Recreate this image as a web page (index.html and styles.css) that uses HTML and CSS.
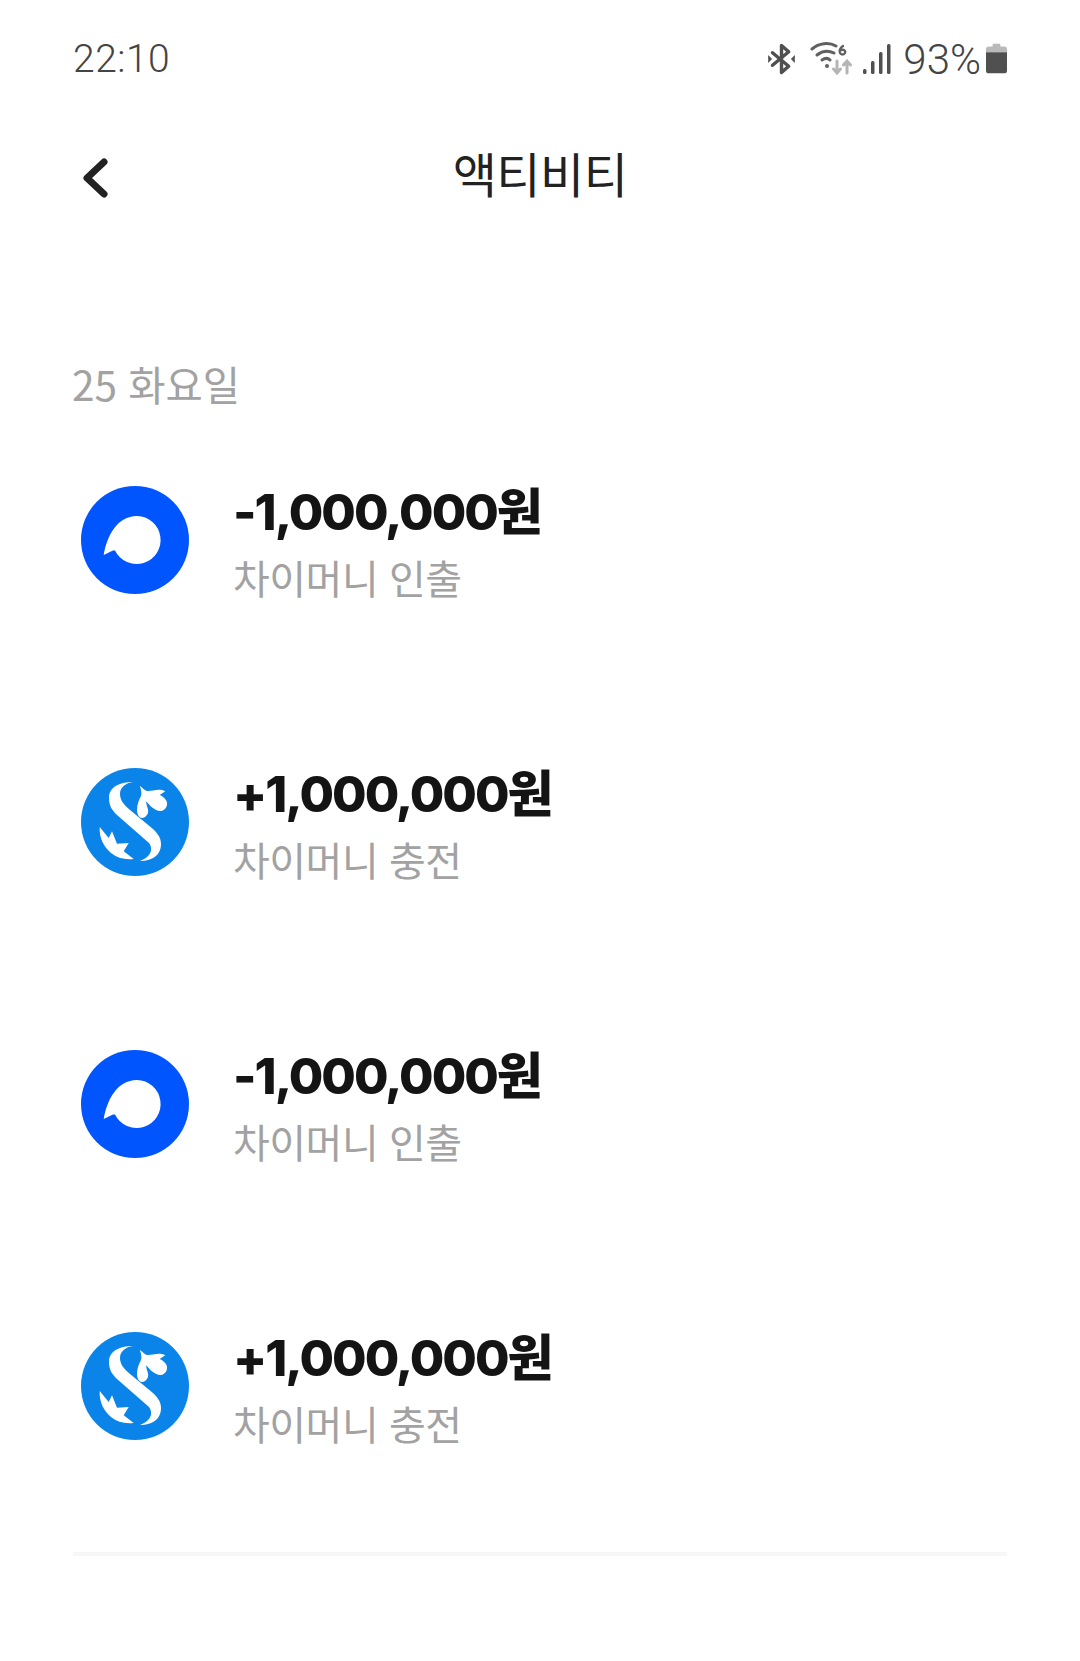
FILE: index.html
```html
<!DOCTYPE html>
<html lang="ko">
<head>
    <meta charset="UTF-8">
    <meta name="viewport" content="width=device-width, initial-scale=1.0">
    <title>액티비티</title>
    <link rel="stylesheet" href="styles.css">
</head>
<body>
    <svg class="sprites" width="0" height="0">
        <symbol id="logo-chai" viewBox="0 0 108 108">
            <circle cx="54" cy="54" r="54" fill="#0055ff"/>
            <path d="M22.700 69C26 50 36 30 56 30a24 24 0 1 1-22 34.500L32 64.500Z" fill="#fff"/>
        </symbol>
        <symbol id="logo-shinhan" viewBox="0 0 108 108">
            <circle cx="54" cy="54" r="54" fill="#0a84e8"/>
            <path d="M52 14C40 14 28 18 28 30C28 38 31 42 36 47L68 75C71 79 71 84 67 88C64 91 61 92 59 93C70 93 80 88 80 76C80 69 76 65 72 61L49 42C43 37 39 32 39 26C39 19 45 15 52 14Z" fill="#fff"/>
            <path d="M58.700 17.700C62 20 64 23 67 23C72 23 78 20 84.300 23.300L78.700 27C83 29 87 33 86 37C85 41 82 43 79 43C74 43 69 38 65.300 33.300C65 38 68 41 67 45C66 48 63 50 61 50C58 50 56 46 56 42C56 36 58 32 60 28C61 25 60 21 58.700 17.700Z" fill="#fff"/>
            <path d="M18.700 59L27.700 70L31 63.300L36 75.700L47.700 75L42.700 83.300L52.700 91C44 92 36 90 30 85C23 79 18 70 18.700 59Z" fill="#fff"/>
        </symbol>
    </svg>

    <div class="status-bar">
        <span class="clock">22:10</span>
        <div class="status-icons">
            <!-- bluetooth -->
            <svg class="icon-bt" width="27" height="32" viewBox="0 0 30 34" fill="none" stroke="#505050" stroke-width="3.800" stroke-linejoin="round" stroke-linecap="round">
                <path d="M5 10L23 25L15 32V2L23 9L5 24"/>
                <path d="M0.500 13.500L4 17L0.500 20.500ZM29.500 13.500L26 17L29.500 20.500Z" fill="#505050" stroke-width="1"/>
            </svg>
            <!-- wifi 6 -->
            <svg class="icon-wifi" width="44" height="34" viewBox="0 0 44 34" fill="none" stroke="#606060" stroke-width="3" stroke-linecap="round">
                <path d="M2 7C9 1 19 0 26 4"/>
                <path d="M7 13C12 9 18 8 24 11"/>
                <path d="M12 18C15 16 18 16 20 18"/>
                <circle cx="17" cy="24" r="2" fill="#606060" stroke="none"/>
                <path d="M33 4C30 6 29 9 30 11C31 13 34 13 35 11C36 9 34 7 31 8" stroke-width="2.400"/>
                <path d="M27 19V31M23.500 27L27 31L30.500 27" stroke="#b5b5b5"/>
                <path d="M37 31V19M33.500 23L37 19L40.500 23" stroke="#b5b5b5"/>
            </svg>
            <!-- signal -->
            <svg class="icon-signal" width="28" height="32" viewBox="0 0 28 32" fill="#505050">
                <rect x="0" y="26" width="3.500" height="5" rx="1.500"/>
                <rect x="8" y="18" width="3.500" height="13" rx="1.500"/>
                <rect x="16" y="9" width="3.500" height="22" rx="1.500"/>
                <rect x="24" y="1" width="3.500" height="30" rx="1.500"/>
            </svg>
            <span class="battery-text">93%</span>
            <svg class="icon-battery" width="21" height="32" viewBox="0 0 22 32">
                <path d="M7 0H15V3H19Q22 3 22 6V9H0V6Q0 3 3 3H7Z" fill="#b9b9b9"/>
                <path d="M0 9H22V28Q22 31 19 31H3Q0 31 0 28Z" fill="#505050"/>
            </svg>
        </div>
    </div>

    <div class="top-bar">
        <svg class="back" width="28" height="42" viewBox="0 0 28 42" fill="none" stroke="#222" stroke-width="7" stroke-linecap="round" stroke-linejoin="round">
            <path d="M23 5L6 21L23 37"/>
        </svg>
        <h1 class="page-title">액티비티</h1>
    </div>

    <div class="day-label">25 화요일</div>

    <ul class="activity-list">
        <li class="activity-row">
            <svg class="logo"><use href="#logo-chai"/></svg>
            <div class="activity-text">
                <div class="amount">-1,000,000원</div>
                <div class="desc">차이머니 인출</div>
            </div>
        </li>
        <li class="activity-row">
            <svg class="logo"><use href="#logo-shinhan"/></svg>
            <div class="activity-text">
                <div class="amount">+1,000,000원</div>
                <div class="desc">차이머니 충전</div>
            </div>
        </li>
        <li class="activity-row">
            <svg class="logo"><use href="#logo-chai"/></svg>
            <div class="activity-text">
                <div class="amount">-1,000,000원</div>
                <div class="desc">차이머니 인출</div>
            </div>
        </li>
        <li class="activity-row">
            <svg class="logo"><use href="#logo-shinhan"/></svg>
            <div class="activity-text">
                <div class="amount">+1,000,000원</div>
                <div class="desc">차이머니 충전</div>
            </div>
        </li>
    </ul>

    <div class="divider"></div>
</body>
</html>
```

FILE: styles.css
```css
body {
    font-family: 'Noto Sans CJK KR', 'Noto Sans', sans-serif;
    background-color: #fff;
    margin: 0;
    padding: 0 73px;
    height: 1661px;
    box-sizing: border-box;
    overflow: hidden;
}

.sprites {
    display: block;
    height: 0;
}

.status-bar {
    display: flex;
    justify-content: space-between;
    align-items: center;
    height: 44px;
    padding-top: 37px;
}

.clock {
    font-family: Roboto, sans-serif;
    font-weight: 300;
    font-size: 39px;
    letter-spacing: 0.5px;
    color: #444;
}

.status-icons {
    display: flex;
    align-items: center;
}

.icon-bt {
    margin-right: 15px;
}

.icon-wifi {
    margin-right: 9px;
}

.icon-signal {
    margin-right: 12px;
}

.battery-text {
    font-family: Roboto, sans-serif;
    font-weight: 300;
    font-size: 42px;
    color: #444;
    margin-right: 5px;
}

.top-bar {
    position: relative;
    display: flex;
    justify-content: center;
    align-items: center;
    height: 60px;
    margin-top: 64px;
}

.back {
    position: absolute;
    left: 8px;
    top: 12px;
}

.page-title {
    margin: 0 0 6px;
    font-size: 48px;
    font-weight: 400;
    line-height: 60px;
    letter-spacing: -0.5px;
    color: #222;
}

.day-label {
    margin-top: 149px;
    font-size: 40.5px;
    font-weight: 400;
    line-height: 60px;
    margin-left: -1px;
    color: #a2a2a2;
}

.activity-list {
    list-style: none;
    margin: 72px 0 0;
    padding: 0 0 0 8px;
}

.activity-row {
    display: flex;
    align-items: center;
    gap: 44px;
    height: 108px;
    margin-bottom: 174px;
}

.logo {
    width: 108px;
    height: 108px;
    flex-shrink: 0;
}

.activity-text {
    display: flex;
    flex-direction: column;
    gap: 5px;
    padding-top: 8px;
}

.amount {
    font-family: Inter, 'Noto Sans CJK KR', sans-serif;
    font-size: 50px;
    font-weight: 800;
    line-height: 60px;
    letter-spacing: -2px;
    color: #141414;
}

.desc {
    font-size: 40px;
    font-weight: 400;
    line-height: 60px;
    letter-spacing: -0.5px;
    color: #a2a2a2;
}

.divider {
    height: 4px;
    margin-top: -62px;
    background-color: #f7f7f7;
}
```
